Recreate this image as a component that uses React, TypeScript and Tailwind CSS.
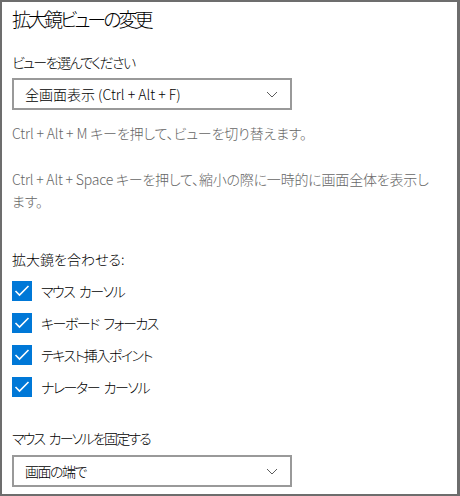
import React from 'react';

const font = { fontFamily: '"Noto Sans CJK JP", "Noto Sans", sans-serif' };

function Chevron() {
  return (
    <svg width="12" height="7" viewBox="0 0 12 7" className="mr-[12px]">
      <polyline points="1,1 6,6 11,1" fill="none" stroke="#5c5c5c" strokeWidth="1" />
    </svg>
  );
}

function Dropdown({ value, className = '', valueClass = '' }: { value: string; className?: string; valueClass?: string }) {
  return (
    <div className={`w-[280px] h-[32px] border-2 border-[#999999] flex items-center justify-between pl-[11px] text-[14px] text-black ${className}`}>
      <span className={valueClass}>{value}</span>
      <Chevron />
    </div>
  );
}

function Check({ label }: { label: string }) {
  return (
    <div className="h-[32px] flex items-center">
      <div className="w-[20px] h-[20px] bg-[#0078d7] flex items-center justify-center">
        <svg width="20" height="20" viewBox="0 0 20 20">
          <polyline points="3.5,10 7.5,14 16.5,5" fill="none" stroke="#fff" strokeWidth="1.6" />
        </svg>
      </div>
      <span className="ml-[9px] text-[14px] text-black tracking-[-1.5px] [word-spacing:3px]">{label}</span>
    </div>
  );
}

export default function App() {
  return (
    <div
      style={font}
      className="w-[460px] h-[496px] box-border bg-white border-l-2 border-t-2 border-r-[3px] border-b-2 border-[#6d6d6d] pl-[10px] overflow-hidden font-light [font-feature-settings:'palt']"
    >
      <h1 className="text-[19px] leading-[28px] mt-[2.5px] text-black tracking-[-3px]">拡大鏡ビューの変更</h1>

      <p className="mt-[19.5px] text-[14px] leading-[20px] text-black tracking-[-1.6px]">ビューを選んでください</p>
      <Dropdown value="全画面表示 (Ctrl + Alt + F)" className="mt-[6px]" />

      <p className="mt-[13px] text-[14px] leading-[20px] text-[#666666] tracking-[-0.15px]">
        Ctrl + Alt + M キーを押して、ビューを切り替えます。
      </p>
      <p className="mt-[24.5px] text-[14px] leading-[22px] text-[#666666] tracking-[-0.2px]">
        Ctrl + Alt + Space キーを押して、縮小の際に一時的に画面全体を表示し
        <br />
        ます。
      </p>

      <p className="mt-[37px] text-[14px] leading-[20px] text-black">拡大鏡を合わせる:</p>
      <div className="mt-[6.5px] flex flex-col">
        <Check label="マウス カーソル" />
        <Check label="キーボード フォーカス" />
        <Check label="テキスト挿入ポイント" />
        <Check label="ナレーター カーソル" />
      </div>

      <p className="mt-[24.5px] text-[14px] leading-[20px] text-black tracking-[-1.8px] [word-spacing:3px]">マウス カーソルを固定する</p>
      <Dropdown value="画面の端で" className="mt-[7.5px]" valueClass="tracking-[-1.5px]" />
    </div>
  );
}
